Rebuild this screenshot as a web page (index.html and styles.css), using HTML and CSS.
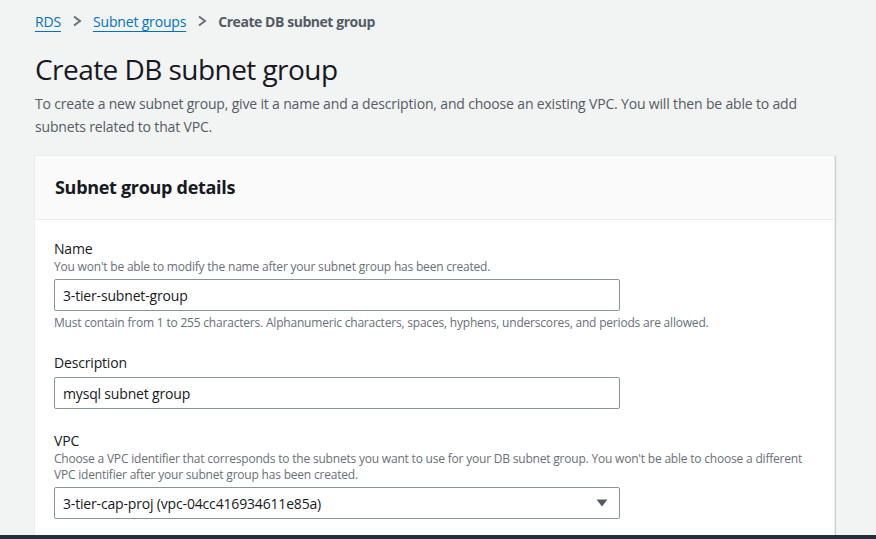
FILE: index.html
```html
<!DOCTYPE html>
<html>
<head>
<meta charset="utf-8">
<link rel="stylesheet" href="styles.css">
</head>
<body>
<div class="page">
  <nav class="crumbs">
    <a class="crumb-link">RDS</a>
    <svg class="chev" width="10" height="14" viewBox="0 0 10 14"><path d="M2 2.5l6 4.5-6 4.5" fill="none" stroke="#687078" stroke-width="2"/></svg>
    <a class="crumb-link">Subnet groups</a>
    <svg class="chev" width="10" height="14" viewBox="0 0 10 14"><path d="M2 2.5l6 4.5-6 4.5" fill="none" stroke="#687078" stroke-width="2"/></svg>
    <span class="crumb-current">Create DB subnet group</span>
  </nav>
  <h1 class="title">Create DB subnet group</h1>
  <p class="intro">To create a new subnet group, give it a name and a description, and choose an existing VPC. You will then be able to add subnets related to that VPC.</p>

  <section class="card">
    <header class="card-head"><h2>Subnet group details</h2></header>
    <div class="card-body">
      <div class="field">
        <div class="label">Name</div>
        <div class="hint">You won't be able to modify the name after your subnet group has been created.</div>
        <div class="input">3-tier-subnet-group</div>
        <div class="constraint">Must contain from 1 to 255 characters. Alphanumeric characters, spaces, hyphens, underscores, and periods are allowed.</div>
      </div>
      <div class="field">
        <div class="label">Description</div>
        <div class="input">mysql subnet group</div>
      </div>
      <div class="field">
        <div class="label">VPC</div>
        <div class="hint">Choose a VPC identifier that corresponds to the subnets you want to use for your DB subnet group. You won't be able to choose a different VPC identifier after your subnet group has been created.</div>
        <div class="input select"><span>3-tier-cap-proj (vpc-04cc416934611e85a)</span><svg width="12" height="10" viewBox="0 0 12 10"><path d="M0.5 1.5h11L6 8.5z" fill="#545b64"/></svg></div>
      </div>
    </div>
  </section>
</div>
<div class="footer-bar"></div>
</body>
</html>
```

FILE: styles.css
```css
html, body {
  margin: 0;
  padding: 0;
  background: #f2f3f3;
  font-family: "Open Sans", "Noto Sans", sans-serif;
  color: #16191f;
  overflow: hidden;
  height: 539px;
}
.page {
  padding: 10px 41px 0 34px;
  letter-spacing: -0.17px;
}
.crumbs {
  display: flex;
  align-items: center;
  gap: 8px;
  font-size: 14px;
  height: 22px;
}
.crumb-link {
  color: #0073bb;
  text-decoration: underline;
  text-underline-offset: 4px;
}
.crumb-link:first-child { margin-left: 1px; }
.crumb-current {
  color: #545b64;
  font-weight: bold;
  letter-spacing: -0.45px;
}
.chev { margin: 0 3px; }
.title {
  font-size: 28px;
  font-weight: normal;
  margin: 19px 0 0 1px;
  line-height: 36px;
  letter-spacing: -0.55px;
}
.intro {
  margin: 5px 0 0 1px;
  font-size: 14px;
  line-height: 23px;
  color: #545b64;
}
.card {
  margin-top: 17px;
  background: #fff;
  border: 1px solid #eaeded;
  box-shadow: 1px 1px 1px rgba(0,22,40,0.15);
}
.card-head {
  background: #fafafa;
  border-bottom: 1px solid #eaeded;
  box-sizing: border-box;
  height: 64px;
  display: flex;
  align-items: center;
  padding: 0 20px;
}
.card-head h2 {
  margin: 0 0 2px;
  font-size: 18px;
  font-weight: bold;
  letter-spacing: -0.3px;
}
.card-body {
  padding: 19px 19px 40px;
}
.field { margin-bottom: 22px; }
.label {
  font-size: 14px;
  line-height: 20px;
}
.hint, .constraint {
  font-size: 12px;
  line-height: 16px;
  color: #687078;
  letter-spacing: -0.2px;
}
.hint { margin-bottom: 4px; }
.constraint { margin-top: 4px; }
.label + .input { margin-top: 4px; }
.input {
  width: 566px;
  border: 1px solid #879596;
  border-radius: 2px;
  box-sizing: border-box;
  height: 32px;
  padding: 0 8px;
  font-size: 14px;
  display: flex;
  align-items: center;
}
.select { justify-content: space-between; padding-right: 11px; }
.footer-bar {
  position: fixed;
  left: 0; right: 0; bottom: 0;
  height: 4px;
  background: #232f3e;
}
```
